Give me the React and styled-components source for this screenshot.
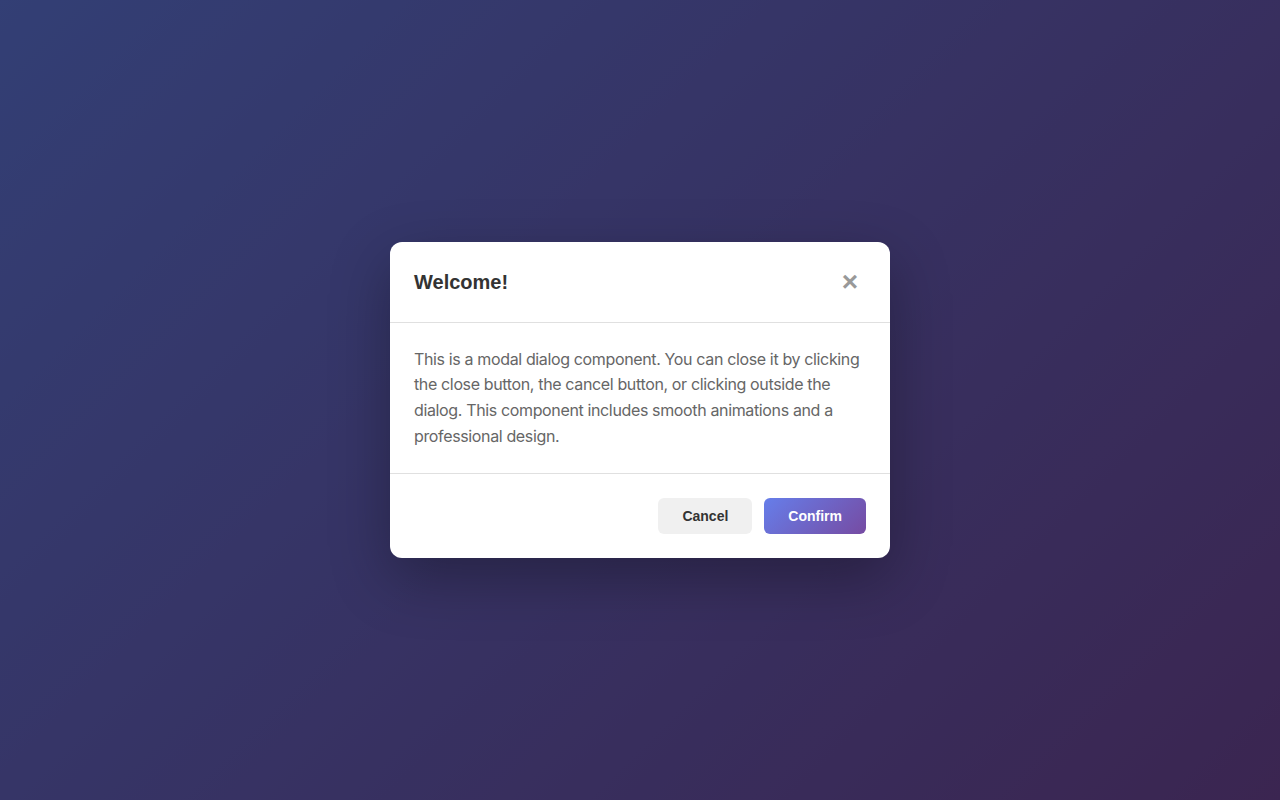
import React from 'react';
import styled, { createGlobalStyle } from 'styled-components';

const GlobalStyle = createGlobalStyle`
  * { box-sizing: border-box; }
  html, body { margin: 0; padding: 0; }
  body {
    font-family: Inter, -apple-system, 'Liberation Sans', sans-serif;
  }
`;

const Page = styled.div`
  position: relative;
  width: 100vw;
  height: 100vh;
  background: linear-gradient(135deg, #667eea 0%, #764ba2 100%);
  overflow: hidden;
`;

const Overlay = styled.div`
  position: absolute;
  inset: 0;
  background: rgba(0, 0, 0, 0.5);
  display: flex;
  align-items: center;
  justify-content: center;
`;

const Dialog = styled.div`
  width: 500px;
  background: #fff;
  border-radius: 12px;
  box-shadow: 0 20px 60px rgba(0, 0, 0, 0.3);
  overflow: hidden;
`;

const Header = styled.div`
  display: flex;
  align-items: center;
  justify-content: space-between;
  padding: 24px;
  border-bottom: 1px solid #e0e0e0;
`;

const Title = styled.h2`
  margin: 0;
  font-family: 'Liberation Sans', Arial, sans-serif;
  font-size: 20px;
  font-weight: 700;
  color: #333;
  transform: translateY(1px);
`;

const CloseButton = styled.button`
  width: 32px;
  height: 32px;
  padding: 0;
  border: none;
  background: none;
  color: #999;
  font-family: 'Liberation Sans', Arial, sans-serif;
  font-size: 28px;
  font-weight: 700;
  line-height: 1;
  display: flex;
  align-items: center;
  justify-content: center;
  cursor: pointer;
  border-radius: 6px;
`;

const Body = styled.div`
  padding: 24px;
  border-bottom: 1px solid #e0e0e0;
`;

const Text = styled.p`
  margin: 0;
  font-size: 16px;
  line-height: 1.6;
  letter-spacing: -0.36px;
  color: #666;
`;

const Footer = styled.div`
  display: flex;
  justify-content: flex-end;
  gap: 12px;
  padding: 24px;
`;

const Button = styled.button`
  height: 36px;
  padding: 0 24px;
  border: none;
  border-radius: 6px;
  font-family: 'Liberation Sans', Arial, sans-serif;
  font-size: 14px;
  font-weight: 700;
  cursor: pointer;
  color: ${(p) => (p.$primary ? '#fff' : '#333')};
  background: ${(p) =>
    p.$primary ? 'linear-gradient(135deg, #667eea 0%, #764ba2 100%)' : '#f0f0f0'};
`;

export default function App() {
  return (
    <>
      <GlobalStyle />
      <Page>
        <Overlay>
          <Dialog>
            <Header>
              <Title>Welcome!</Title>
              <CloseButton aria-label="Close">×</CloseButton>
            </Header>
            <Body>
              <Text>
                This is a modal dialog component. You can close it by clicking the close button,
                the cancel button, or clicking outside the dialog. This component includes smooth
                animations and a professional design.
              </Text>
            </Body>
            <Footer>
              <Button>Cancel</Button>
              <Button $primary>Confirm</Button>
            </Footer>
          </Dialog>
        </Overlay>
      </Page>
    </>
  );
}
